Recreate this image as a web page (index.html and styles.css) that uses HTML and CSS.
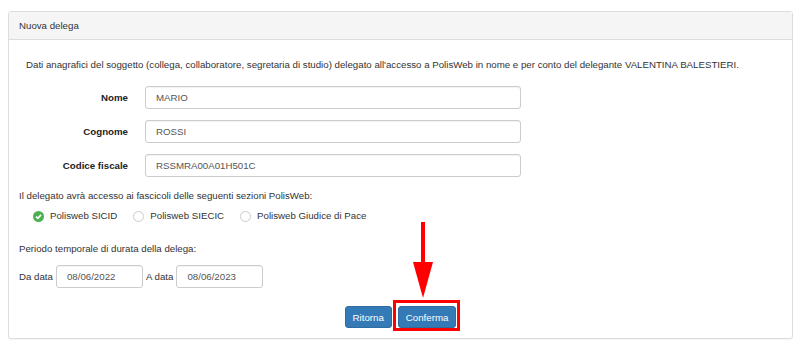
FILE: index.html
```html
<!DOCTYPE html>
<html>
<head>
<meta charset="utf-8">
<title>Nuova delega</title>
<link rel="stylesheet" href="styles.css">
</head>
<body>
<div class="panel">
  <div class="panel-heading">Nuova delega</div>
  <div class="panel-body">
    <p class="intro">Dati anagrafici del soggetto (collega, collaboratore, segretaria di studio) delegato all'accesso a PolisWeb in nome e per conto del delegante VALENTINA BALESTIERI.</p>

    <div class="form-rows">
      <label class="lbl">Nome</label>
      <div class="field">MARIO</div>
      <label class="lbl">Cognome</label>
      <div class="field">ROSSI</div>
      <label class="lbl">Codice fiscale</label>
      <div class="field">RSSMRA00A01H501C</div>
    </div>

    <p class="note">Il delegato avrà accesso ai fascicoli delle seguenti sezioni PolisWeb:</p>
    <div class="checks">
      <span class="opt"><span class="tick"><svg width="11" height="11" viewBox="0 0 11 11"><circle cx="5.5" cy="5.5" r="5.5" fill="#4caf50"/><path d="M3 5.7 L4.8 7.4 L8.1 3.9" fill="none" stroke="#fff" stroke-width="1.6"/></svg></span>Polisweb SICID</span>
      <span class="opt"><span class="radio"></span>Polisweb SIECIC</span>
      <span class="opt"><span class="radio"></span>Polisweb Giudice di Pace</span>
    </div>

    <p class="note period">Periodo temporale di durata della delega:</p>
    <div class="dates">
      <span>Da data</span>
      <div class="field date">08/06/2022</div>
      <span>A data</span>
      <div class="field date">08/06/2023</div>
    </div>

    <div class="actions">
      <button class="btn">Ritorna</button>
      <button class="btn marked">Conferma</button>
    </div>
  </div>
  <svg class="arrow" width="24" height="78" viewBox="0 0 24 78">
    <rect x="10" y="0" width="4" height="44" fill="#f00"/>
    <path d="M2 40 L22 40 L12 76 Z" fill="#f00"/>
  </svg>
</div>
</body>
</html>
```

FILE: styles.css
```css
* { box-sizing: border-box; }
body { margin: 0; padding: 11px 10px 14px 8px; font-family: "Liberation Sans", Arial, sans-serif; font-size: 9.7px; color: #333; background: #fff; }
.panel { position: relative; border: 1px solid #ddd; border-radius: 3px; background: #fff; box-shadow: 0 1px 1px rgba(0,0,0,0.04); }
.panel-heading { height: 28px; line-height: 27px; padding: 0 10px; background: #f5f5f5; border-bottom: 1px solid #ddd; }
.panel-body { padding: 17px 10px 10px 10px; }
.intro { margin: 0 0 13px 7px; line-height: 16px; }
.form-rows { display: grid; grid-template-columns: 109px 376px; column-gap: 17px; row-gap: 11px; align-items: center; }
.lbl { font-weight: bold; text-align: right; color: #222; }
.field { height: 23px; line-height: 21px; padding: 0 10px; border: 1px solid #ccc; border-radius: 3px; color: #555; box-shadow: inset 0 1px 1px rgba(0,0,0,0.05); }
.note { margin: 11px 0 0 0; line-height: 16px; }
.checks { display: flex; gap: 16px; margin: 4px 0 0 14px; line-height: 16px; }
.opt { display: flex; align-items: center; gap: 6px; }
.tick { display: flex; width: 11px; height: 11px; }
.radio { width: 11px; height: 11px; border: 1px solid #ccc; border-radius: 50%; background: #fff; }
.period { margin-top: 17px; }
.dates { display: flex; align-items: center; gap: 3px; margin-top: 8px; }
.date { width: 87px; }
.actions { display: flex; justify-content: center; gap: 6px; margin-top: 18px; }
.btn { height: 22px; padding: 0 7px; border: 1px solid #2e6da4; border-radius: 3px; background: #337ab7; color: #fff; font-family: "Liberation Sans", Arial, sans-serif; font-size: 9.7px; }
.marked { position: relative; }
.marked::after { content: ""; position: absolute; top: -7px; bottom: -4px; left: -6px; right: -5px; border: 3px solid #f00; }
.arrow { position: absolute; left: 402px; top: 210px; }
```
